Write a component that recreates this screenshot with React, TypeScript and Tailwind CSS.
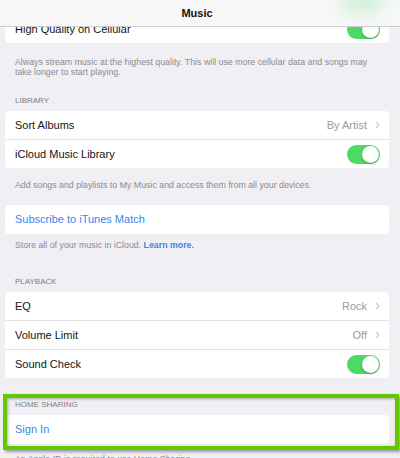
import type { ReactNode } from 'react';

const Toggle = () => (
  <span className="flex h-[19px] w-[33px] items-center justify-end rounded-full bg-[#4cd964] p-[1px]">
    <span className="h-[17px] w-[17px] rounded-full bg-white shadow-[0_1px_2px_rgba(0,0,0,0.3)]" />
  </span>
);

const Chevron = () => (
  <svg width="5" height="8" viewBox="0 0 5 8" className="ml-[8px]">
    <path d="M0.8 0.8 L4 4 L0.8 7.2" fill="none" stroke="#c4c4c9" strokeWidth="1.1" />
  </svg>
);

function Row({ label, value, toggle, first }: { label: string; value?: string; toggle?: boolean; first?: boolean }) {
  return (
    <div
      className={`flex items-center justify-between pl-[10px] pr-[9px] ${
        first ? 'h-[28px]' : 'h-[29px] border-t border-[#e2e2e6]'
      }`}
    >
      <span className="text-[#141414]">{label}</span>
      {toggle && <Toggle />}
      {value && (
        <span className="flex items-center text-[#9b9ba0]">
          {value}
          <Chevron />
        </span>
      )}
    </div>
  );
}

const Card = ({ children }: { children: ReactNode }) => (
  <div className="rounded-[4px] bg-white text-[11px]">{children}</div>
);

const LinkCard = ({ label }: { label: string }) => (
  <Card>
    <div className="flex h-[29px] items-center pl-[10px] text-[#3a86f0]">{label}</div>
  </Card>
);

const Header = ({ children, className }: { children: ReactNode; className: string }) => (
  <p className={`pl-[10px] text-[8px] leading-[10px] uppercase text-[#7d7d82] ${className}`}>{children}</p>
);

const Footer = ({ children, className }: { children: ReactNode; className: string }) => (
  <p className={`pl-[10px] text-[8.8px] leading-[10px] text-[#8b8b90] ${className}`}>{children}</p>
);

export default function App() {
  return (
    <div className="relative h-[458px] w-[400px] overflow-hidden bg-[#efeff4] font-['Liberation_Sans',Arial,sans-serif]">
      <div className="pl-[5px] pr-[11px] pt-[15px]">
        <Card>
          <Row label="High Quality on Cellular" toggle first />
        </Card>
        <Footer className="mt-[14px]">
          Always stream music at the highest quality. This will use more cellular data and songs may
          <br />
          take longer to start playing.
        </Footer>

        <Header className="mt-[19px] mb-[5px]">Library</Header>
        <Card>
          <Row label="Sort Albums" value="By Artist" first />
          <Row label="iCloud Music Library" toggle />
        </Card>
        <Footer className="mt-[12px]">Add songs and playlists to My Music and access them from all your devices.</Footer>

        <div className="mt-[15px]">
          <LinkCard label="Subscribe to iTunes Match" />
        </div>
        <Footer className="mt-[6px]">
          Store all of your music in iCloud. <span className="font-bold text-[#3a86f0]">Learn more.</span>
        </Footer>

        <Header className="mt-[27px] mb-[5px]">Playback</Header>
        <Card>
          <Row label="EQ" value="Rock" first />
          <Row label="Volume Limit" value="Off" />
          <Row label="Sound Check" toggle />
        </Card>

        <Header className="mt-[22px] mb-[5px]">Home Sharing</Header>
        <LinkCard label="Sign In" />
        <Footer className="mt-[10px]">An Apple ID is required to use Home Sharing.</Footer>
      </div>

      {/* navigation bar; the green glow is the toggle scrolled underneath */}
      <div className="absolute inset-x-0 top-0 flex h-[27px] items-center justify-center overflow-hidden border-b border-[#cdcdd1] bg-[#f7f7f8] pr-[6px]">
        <span className="absolute right-[18px] top-[-10px] h-[22px] w-[40px] rounded-full bg-[#4cd964] opacity-25 blur-[9px]" />
        <span className="relative text-[11px] font-bold text-[#111]">Music</span>
      </div>

      {/* highlight frame around Home Sharing */}
      <div className="absolute left-[3px] top-[394px] h-[56px] w-[396px] border-[4px] border-[#64c800] shadow-[2px_2px_3px_rgba(0,0,0,0.35),inset_1px_1px_3px_rgba(0,0,0,0.3)]" />
    </div>
  );
}
